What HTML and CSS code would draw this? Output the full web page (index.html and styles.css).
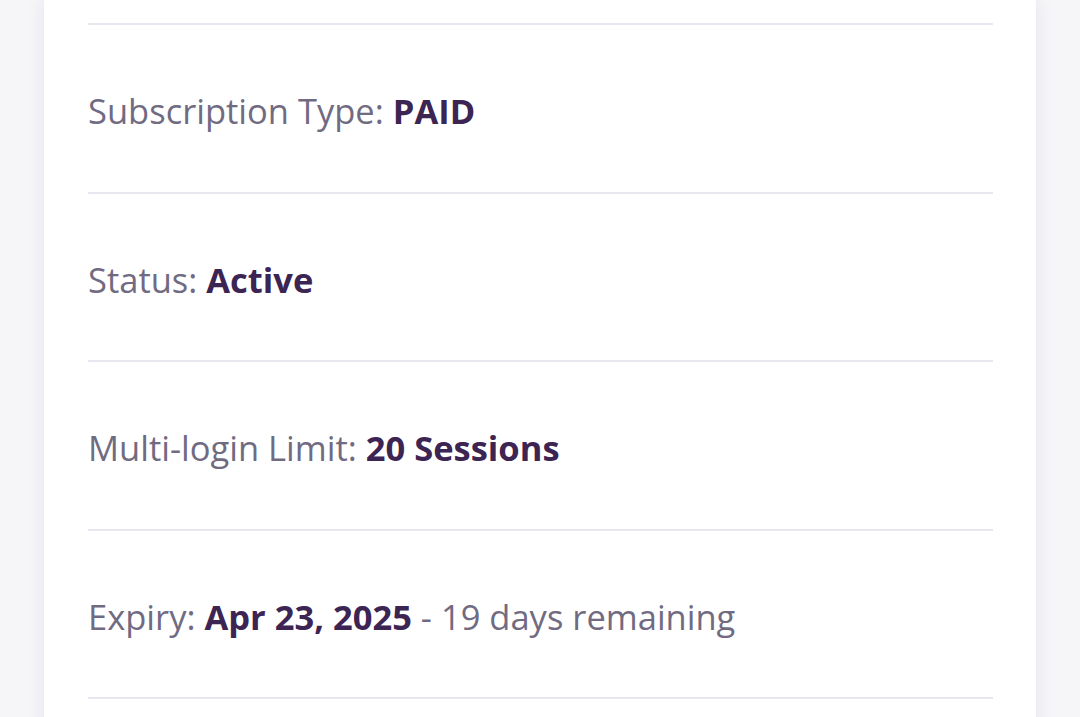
FILE: index.html
```html
<!DOCTYPE html>
<html lang="en">
<head>
    <meta charset="UTF-8">
    <title>Subscription</title>
    <link rel="stylesheet" href="styles.css">
</head>
<body>
<div class="page">
    <div class="card">
        <ul class="details">
            <li class="details-item">Subscription Type: <b class="value">PAID</b></li>
            <li class="details-item">Status: <b class="value">Active</b></li>
            <li class="details-item">Multi-login Limit: <b class="value">20 Sessions</b></li>
            <li class="details-item">Expiry: <b class="value">Apr 23, 2025</b> - 19 days remaining</li>
        </ul>
    </div>
</div>
</body>
</html>
```

FILE: styles.css
```css
html, body {
    margin: 0;
    height: 100%;
    overflow: hidden;
}

body {
    background-color: #f6f5f8;
    font-family: "Open Sans", "Noto Sans", sans-serif;
}

.page {
    padding: 0 44px;
}

.card {
    background-color: #fff;
    padding: 23px 43px 40px 44px;
    box-shadow: 0 0 18px rgba(60, 40, 90, 0.08);
    min-height: 800px;
}

.details {
    list-style: none;
    margin: 0;
    padding: 0;
    border-top: 2px solid #e8e7ef;
}

.details-item {
    padding: 62px 0 56.5px;
    border-bottom: 2px solid #e8e7ef;
    font-size: 34.5px;
    line-height: 48px;
    color: #716b82;
}

.value {
    font-weight: 700;
    color: #3c2453;
}
```
